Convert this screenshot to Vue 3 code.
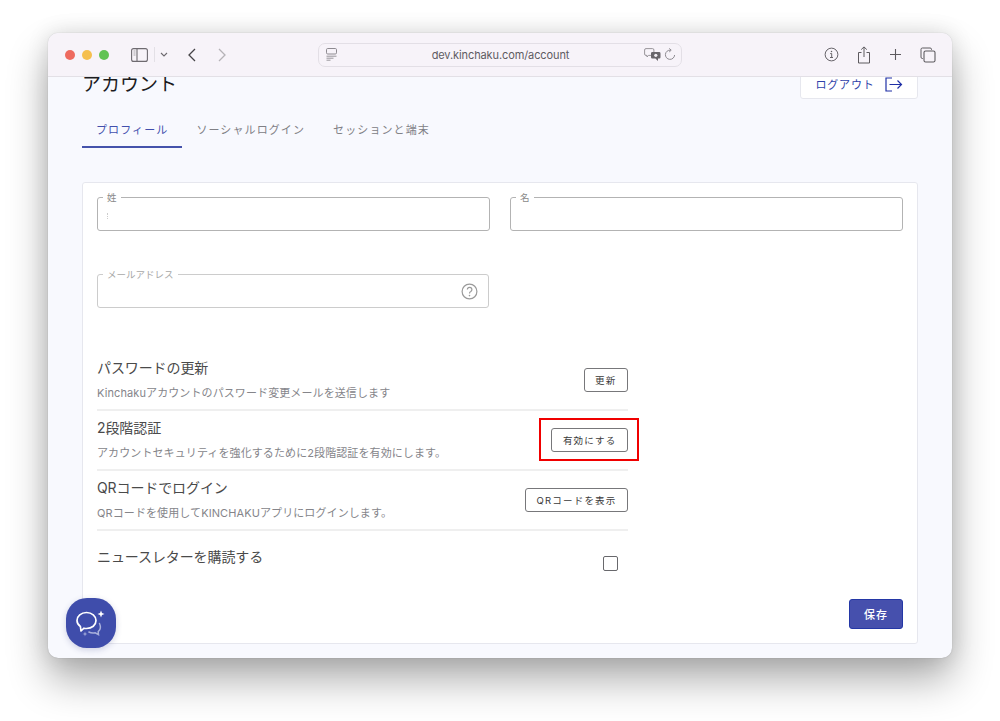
<script setup>
const tabs = [
  { label: "プロフィール", active: true },
  { label: "ソーシャルログイン", active: false },
  { label: "セッションと端末", active: false },
];

const settings = [
  { title: "パスワードの更新", desc: "Kinchakuアカウントのパスワード変更メールを送信します", action: "更新", marked: false },
  { title: "2段階認証", desc: "アカウントセキュリティを強化するために2段階認証を有効にします。", action: "有効にする", marked: true },
  { title: "QRコードでログイン", desc: "QRコードを使用してKINCHAKUアプリにログインします。", action: "QRコードを表示", marked: false },
];
</script>

<template>
  <div class="desktop">
    <div class="window">
      <header class="toolbar">
        <div class="lights">
          <span class="light red"></span>
          <span class="light yellow"></span>
          <span class="light green"></span>
        </div>
        <svg class="sidebar-icon" width="17" height="14" viewBox="0 0 17 14" fill="none">
          <rect x="0.6" y="0.6" width="15.8" height="12.8" rx="2" stroke="#6e6a70" stroke-width="1.1" />
          <path d="M6 1v12" stroke="#6e6a70" stroke-width="1.1" />
          <path d="M2.5 3h2M2.5 5h2M2.5 7h2" stroke="#a9a6ab" stroke-width="1" />
        </svg>
        <span class="tool-divider"></span>
        <svg class="chevron" width="8" height="5" viewBox="0 0 8 5" fill="none">
          <path d="M1 1l3 3 3-3" stroke="#6e6a70" stroke-width="1.1" />
        </svg>
        <svg class="back" width="10" height="14" viewBox="0 0 10 14" fill="none">
          <path d="M8 1L2 7l6 6" stroke="#454347" stroke-width="1.3" />
        </svg>
        <svg class="forward" width="10" height="14" viewBox="0 0 10 14" fill="none">
          <path d="M2 1l6 6-6 6" stroke="#b5b2b7" stroke-width="1.3" />
        </svg>
        <div class="urlbar">
          <svg class="page-icon" width="11" height="13" viewBox="0 0 11 13" fill="none">
            <rect x="0.5" y="0.5" width="10" height="5.5" rx="1.2" stroke="#8d8a90" />
            <path d="M0.5 8.2h10M0.5 10.2h7M0.5 12.2h4" stroke="#8d8a90" stroke-width="0.9" />
          </svg>
          <span class="url">dev.kinchaku.com/account</span>
          <svg class="translate-icon" width="17" height="13" viewBox="0 0 17 13" fill="none">
            <path d="M2 0.6h6.5a1.4 1.4 0 0 1 1.4 1.4v4a1.4 1.4 0 0 1-1.4 1.4H4.5L3 9V7.4H2A1.4 1.4 0 0 1 .6 6V2A1.4 1.4 0 0 1 2 .6z" fill="#f7f3f9" stroke="#8d8a90" stroke-width="0.9" />
            <path d="M8.5 4h6.600a1.400 1.400 0 0 1 1.400 1.400v3.800a1.400 1.400 0 0 1-1.400 1.400H14V13l-2.600-2.400H8.500A1.400 1.400 0 0 1 7 9.200V5.400A1.400 1.400 0 0 1 8.500 4z" fill="#68656a" />
            <circle cx="11.8" cy="7.3" r="1.6" fill="#f0edf2" />
          </svg>
          <svg class="reload-icon" width="12" height="13" viewBox="0 0 12 13" fill="none">
            <path d="M6.5 2.2A4.6 4.6 0 1 0 10.6 7" stroke="#8d8a90" stroke-width="1" />
            <path d="M5.2 0.4l2 1.8-2 1.800" stroke="#8d8a90" stroke-width="1" />
          </svg>
        </div>
        <div class="tool-actions">
          <svg width="15" height="15" viewBox="0 0 16 16" fill="none">
            <circle cx="8" cy="8" r="6.8" stroke="#5d5a5f" stroke-width="1" />
            <path d="M6.6 7h1.600v4M6.400 11.200h3.200" stroke="#5d5a5f" stroke-width="1" />
            <circle cx="8" cy="4.8" r="0.8" fill="#5d5a5f" />
          </svg>
          <svg width="14" height="18" viewBox="0 0 14 18" fill="none">
            <path d="M4.500 6.500H1.500v10.500h11V6.500h-3" stroke="#5d5a5f" stroke-width="1" />
            <path d="M7 11V1M4.200 3.600L7 .9l2.800 2.700" stroke="#5d5a5f" stroke-width="1" />
          </svg>
          <svg width="13" height="13" viewBox="0 0 13 13" fill="none">
            <path d="M6.500 1v11M1 6.500h11" stroke="#5d5a5f" stroke-width="1.100" />
          </svg>
          <svg width="16" height="16" viewBox="0 0 16 16" fill="none">
            <path d="M3 11.500H2.400A1.400 1.400 0 0 1 1 10.100V2.400A1.400 1.400 0 0 1 2.400 1h7.700a1.400 1.400 0 0 1 1.400 1.400V3" stroke="#5d5a5f" stroke-width="1" />
            <rect x="4" y="4" width="11" height="11" rx="1.6" stroke="#5d5a5f" stroke-width="1.100" />
          </svg>
        </div>
      </header>

      <main class="page">
        <div class="page-head">
          <h1 class="page-title">アカウント</h1>
          <button class="logout">
            ログアウト
            <svg width="18" height="15" viewBox="0 0 18 15" fill="none">
              <path d="M7 1H1v13h6" stroke="#1f2fa6" stroke-width="1.200" />
              <path d="M4.500 7.500h12M12.500 3.500l4 4-4 4" stroke="#1f2fa6" stroke-width="1.200" />
            </svg>
          </button>
        </div>

        <nav class="tabs">
          <span v-for="tab in tabs" :key="tab.label" class="tab" :class="{ active: tab.active }">{{ tab.label }}</span>
        </nav>

        <section class="card">
          <div class="fields">
            <div class="field">
              <span class="field-label">姓</span>
              <span class="caret"></span>
            </div>
            <div class="field">
              <span class="field-label">名</span>
            </div>
            <div class="field light-field">
              <span class="field-label">メールアドレス</span>
              <svg class="help" width="17" height="17" viewBox="0 0 17 17" fill="none">
                <circle cx="8.500" cy="8.500" r="7.400" stroke="#9a9a9a" stroke-width="1.200" />
                <path d="M6.300 6.600a2.300 2.300 0 1 1 3.500 2c-.9.500-1.300 1-1.300 1.900" stroke="#9a9a9a" stroke-width="1.200" />
                <circle cx="8.500" cy="12.600" r="0.800" fill="#9a9a9a" />
              </svg>
            </div>
          </div>

          <div class="settings">
            <div v-for="item in settings" :key="item.title" class="setting">
              <div>
                <div class="setting-title">{{ item.title }}</div>
                <div class="setting-desc">{{ item.desc }}</div>
              </div>
              <div class="action">
                <button class="outline-btn">{{ item.action }}</button>
                <span v-if="item.marked" class="red-mark"></span>
              </div>
            </div>
            <div class="setting newsletter">
              <div class="setting-title">ニュースレターを購読する</div>
              <span class="checkbox"></span>
            </div>
          </div>

          <div class="save-row">
            <button class="save">保存</button>
          </div>
        </section>
      </main>

      <div class="chat-fab">
        <svg width="50" height="50" viewBox="0 0 50 50" fill="none">
          <path d="M20.500 14.500c5.400 0 9.500 3.500 9.500 8 0 4.600-4.100 8-9.500 8-.9 0-1.700-.1-2.500-.3L15 33l-.6-4.500c-2.200-1.500-3.400-3.600-3.400-6 0-4.500 4.100-8 9.500-8z" stroke="#fff" stroke-width="1.700" stroke-linejoin="round" />
          <path d="M33.500 25.500c1.600 3.500 1 6.300-1.300 8.200l.3 3-3.300-1.900c-2.300.5-4.500.2-6.300-.8" stroke="#a9b0dc" stroke-width="1.500" stroke-linecap="round" />
          <path d="M35 12.500l1 2.500 2.500 1-2.500 1-1 2.500-1-2.500-2.500-1 2.500-1z" fill="#fff" />
          <path d="M19 33.500l.6 1.900 1.900.6-1.900.6-.6 1.900-.6-1.900-1.900-.6 1.900-.6z" fill="#a9b0dc" />
        </svg>
      </div>
    </div>
  </div>
</template>

<style scoped>
.desktop {
  width: 1000px;
  height: 721px;
  padding: 33px 48px 0;
  box-sizing: border-box;
  overflow: hidden;
  background: #fff;
  font-family: Inter, "Noto Sans CJK JP", sans-serif;
}
.window {
  position: relative;
  width: 904px;
  height: 625px;
  display: flex;
  flex-direction: column;
  border-radius: 10px;
  overflow: hidden;
  background: #f8f9fe;
  box-shadow: 0 0 1px rgba(0, 0, 0, 0.3), 0 22px 40px rgba(0, 0, 0, 0.32), 0 0 22px rgba(0, 0, 0, 0.12);
}
.toolbar {
  height: 44px;
  flex: none;
  display: flex;
  align-items: center;
  box-sizing: border-box;
  padding-left: 17px;
  background: #f7f3f9;
  border-bottom: 1px solid #e3e0e6;
}
.lights {
  display: flex;
  gap: 7px;
}
.light {
  width: 10px;
  height: 10px;
  border-radius: 50%;
}
.red { background: #ee6a5f; }
.yellow { background: #f5bf4f; }
.green { background: #61c354; }
.sidebar-icon {
  margin-left: 22px;
}
.tool-divider {
  width: 1px;
  height: 15px;
  margin-left: 6px;
  background: #e3e0e6;
}
.chevron {
  margin-left: 5px;
}
.back {
  margin-left: 19px;
}
.forward {
  margin-left: 20px;
}
.urlbar {
  width: 364px;
  height: 24px;
  margin-left: 91px;
  box-sizing: border-box;
  display: flex;
  align-items: center;
  padding: 0 5px 0 7px;
  border: 1px solid #e3dfe6;
  border-radius: 7px;
}
.url {
  flex: 1;
  text-align: center;
  font-size: 11px;
  letter-spacing: -0.1px;
  color: #5e5b62;
  padding-left: 20px;
}
.translate-icon {
  margin-right: 3px;
}
.tool-actions {
  display: flex;
  align-items: center;
  gap: 18px;
  margin-left: 142px;
}
.page {
  flex: 1;
  min-height: 0;
  overflow: hidden;
  padding: 0 34px;
}
.page-head {
  display: flex;
  justify-content: space-between;
  align-items: flex-end;
  margin-top: -8px;
}
.page-title {
  margin: 0;
  font-size: 19px;
  line-height: 28px;
  font-weight: 400;
  color: #1c1c1e;
}
.logout {
  width: 118px;
  height: 30px;
  display: flex;
  align-items: center;
  justify-content: center;
  gap: 10px;
  padding: 0;
  background: #fff;
  border: 1px solid #e6e7ee;
  border-radius: 3px;
  font: inherit;
  font-size: 11px;
  letter-spacing: 0.8px;
  color: #2f3fa9;
}
.tabs {
  display: flex;
  margin-top: 13px;
}
.tab {
  padding: 0 14px;
  height: 36px;
  line-height: 36px;
  box-sizing: border-box;
  font-size: 11px;
  letter-spacing: 1.1px;
  color: #808085;
}
.tab.active {
  color: #4250ad;
  border-bottom: 2px solid #4553ab;
}
.card {
  margin-top: 34px;
  padding: 14px;
  background: #fff;
  border: 1px solid #e6e7ee;
  border-radius: 3px;
}
.fields {
  display: grid;
  grid-template-columns: 393px 393px;
  column-gap: 20px;
  row-gap: 43px;
}
.field {
  position: relative;
  height: 34px;
  box-sizing: border-box;
  border: 1px solid #b3b3b3;
  border-radius: 3px;
  display: flex;
  align-items: center;
}
.light-field {
  width: 392px;
  justify-content: flex-end;
  border-color: #cccccc;
}
.field-label {
  position: absolute;
  left: 5px;
  top: -6px;
  padding: 0 4px;
  background: #fff;
  font-size: 9.5px;
  line-height: 12px;
  color: #8a8a8a;
}
.light-field .field-label {
  color: #a8a8a8;
}
.caret {
  height: 6px;
  margin-left: 9px;
  margin-top: 3px;
  border-left: 1px dotted #ccc;
}
.help {
  margin-right: 10px;
}
.settings {
  width: 531px;
  margin-top: 43px;
}
.setting {
  height: 60px;
  box-sizing: border-box;
  display: flex;
  justify-content: space-between;
  align-items: center;
  border-bottom: 2px solid #efefef;
}
.setting-title {
  font-size: 14px;
  line-height: 18px;
  letter-spacing: -0.1px;
  color: #4a4a4a;
}
.setting-desc {
  margin-top: 7px;
  font-size: 11px;
  line-height: 18px;
  letter-spacing: 0.1px;
  color: #85858a;
}
.action {
  position: relative;
  display: flex;
}
.outline-btn {
  height: 24px;
  padding: 0 10.5px;
  background: #fff;
  border: 1px solid #77777a;
  border-radius: 3px;
  font: inherit;
  font-size: 9.5px;
  letter-spacing: 1.2px;
  color: #3a3a3a;
}
.red-mark {
  position: absolute;
  left: -12px;
  right: -11px;
  top: -10px;
  bottom: -9px;
  border: 2px solid #f00000;
}
.newsletter {
  align-items: flex-start;
  padding: 17px 10px 0 0;
  border-bottom: none;
  margin-bottom: 8px;
}
.checkbox {
  width: 15px;
  height: 15px;
  margin-top: 8px;
  box-sizing: border-box;
  border: 1.5px solid #68686c;
  border-radius: 2px;
}
.save-row {
  display: flex;
  justify-content: flex-end;
}
.save {
  width: 54px;
  height: 30px;
  background: #4650ad;
  border: 1px solid #2437a6;
  border-radius: 3px;
  font: inherit;
  font-size: 11px;
  font-weight: 500;
  letter-spacing: 1px;
  color: #fff;
}
.chat-fab {
  position: absolute;
  left: 18px;
  top: 565px;
  width: 50px;
  height: 50px;
  border-radius: 42%;
  background: #3f4dab;
  box-shadow: 0 2px 6px rgba(40, 50, 120, 0.2);
}
.chat-fab svg {
  display: block;
}
</style>
